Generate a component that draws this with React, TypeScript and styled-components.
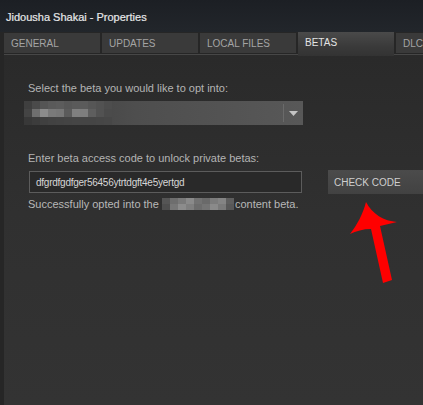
import React from 'react';
import styled, { createGlobalStyle } from 'styled-components';

const Global = createGlobalStyle`
  html, body {
    margin: 0;
    padding: 0;
    background: #262626;
  }
  body {
    font-family: "Liberation Sans", Arial, sans-serif;
    overflow: hidden;
  }
`;

// whole window
const Window = styled.div`
  position: relative;
  width: 423px;
  height: 405px;
  background: #262626;
  display: flex;
  flex-direction: column;
  overflow: hidden;
`;

const TitleBar = styled.div`
  height: 32px;
  flex: none;
  display: flex;
  align-items: center;
  padding-left: 6px;
  padding-top: 2px;
  box-sizing: border-box;
  background: linear-gradient(180deg, #1c1f24 0%, #22262b 100%);
  color: #e6e7e8;
  font-size: 11px;
  font-weight: 500;
  -webkit-text-stroke: 0.2px #e6e7e8;
`;

const TabRow = styled.div`
  display: flex;
  gap: 2px;
  padding-left: 4px;
  height: 22px;
  align-items: flex-start;
  position: relative;
  z-index: 2;
`;

const Tab = styled.div<{ $active?: boolean }>`
  flex: none;
  width: 96px;
  box-sizing: border-box;
  padding-left: 7px;
  margin-top: ${p => (p.$active ? 0 : 1)}px;
  height: ${p => (p.$active ? 24 : 20)}px;
  padding-bottom: ${p => (p.$active ? 3 : 0)}px;
  display: flex;
  align-items: center;
  font-size: 10px;
  white-space: nowrap;
  color: ${p => (p.$active ? '#e4e4e4' : '#a4a4a4')};
  background: ${p =>
    p.$active
      ? 'linear-gradient(180deg, #4a4a4a 0%, #3a3a3a 60%, #333333 100%)'
      : '#3a3a3a'};
`;

const Panel = styled.div`
  flex: 1;
  margin-left: 4px;
  border-top: 1px solid #474747;
  background: linear-gradient(180deg, #2a2a2a 0%, #303030 45%, #333333 100%);
  padding: 26px 0 0 24px;
  display: flex;
  flex-direction: column;
`;

const Label = styled.div<{ $mt?: number }>`
  font-size: 11px;
  color: #b4b4b4;
  line-height: 14px;
  margin-top: ${p => p.$mt ?? 0}px;
`;

const Dropdown = styled.div`
  margin-top: 6px;
  margin-left: -4px;
  width: 279px;
  height: 24px;
  display: flex;
  align-items: stretch;
  background: linear-gradient(90deg, #3c3c3c 0%, #4e4e4e 40%, #585858 100%);
`;

const DropValue = styled.div`
  flex: 1;
  display: flex;
  align-items: center;
`;

const DropArrow = styled.div`
  width: 19px;
  display: flex;
  align-items: center;
  justify-content: center;
  border-left: 1px solid #6a6a6a;
  margin: 3px 0;
`;

const Pixels = styled.div<{ $cols: number; $w: number; $h: number }>`
  display: grid;
  grid-template-columns: repeat(${p => p.$cols}, ${p => p.$w}px);
  grid-auto-rows: ${p => p.$h}px;
`;

const Cell = styled.span`
  display: block;
`;

const CodeRow = styled.div`
  margin-top: 5px;
  display: flex;
  align-items: center;
  gap: 26px;
`;

const CodeInput = styled.div`
  flex: none;
  margin-left: 1px;
  width: 273px;
  height: 22px;
  box-sizing: border-box;
  border: 1px solid #5c5c5c;
  background: #292929;
  display: flex;
  align-items: center;
  padding-left: 6px;
  font-size: 10px;
  letter-spacing: -0.25px;
  color: #d6d6d6;
`;

const CheckButton = styled.div`
  flex: none;
  width: 120px;
  height: 24px;
  display: flex;
  align-items: center;
  padding-left: 6px;
  box-sizing: border-box;
  background: linear-gradient(180deg, #4b4b4b 0%, #424242 100%);
  color: #cfcfcf;
  font-size: 10px;
`;

const Status = styled.div`
  margin-top: 3px;
  display: flex;
  align-items: center;
  font-size: 11px;
  color: #b8b8b8;
  line-height: 14px;
  white-space: pre;
`;

const ArrowMark = styled.svg`
  position: absolute;
  left: 340px;
  top: 195px;
`;

const dropCells = [
  '#3f3f3f', '#4a4a4a', '#555555', '#5a5a5a', '#5c5c5c', '#575757', '#5a5a5a', '#5b5b5b', '#565656', '#525252', '#4d4d4d',
  '#444444', '#6f6f6f', '#8c8c8c', '#7a7a7a', '#777777', '#5b5b5b', '#808080', '#7e7e7e', '#5e5e5e', '#525252', '#4b4b4b',
  '#383838', '#3c3c3c', '#404040', '#424242', '#434343', '#444444', '#454545', '#454545', '#454545', '#464646', '#474747',
];

const statusCells = [
  '#555555', '#6e6e6e', '#7a7a7a', '#8a8a8a', '#727272', '#6a6a6a', '#7c7c7c', '#848484', '#5e5e5e',
  '#4e4e4e', '#777777', '#8c8c8c', '#7f7f7f', '#6c6c6c', '#747474', '#8a8a8a', '#7a7a7a', '#585858',
];

export default function App() {
  const tabs = ['GENERAL', 'UPDATES', 'LOCAL FILES', 'BETAS', 'DLC'];

  return (
    <>
      <Global />
      <Window>
        <TitleBar>Jidousha Shakai - Properties</TitleBar>
        <TabRow>
          {tabs.map(t => (
            <Tab key={t} $active={t === 'BETAS'}>{t}</Tab>
          ))}
        </TabRow>
        <Panel>
          <Label>Select the beta you would like to opt into:</Label>
          <Dropdown>
            <DropValue>
              <Pixels $cols={11} $w={8} $h={8}>
                {dropCells.map((c, i) => (
                  <Cell key={i} style={{ background: c }} />
                ))}
              </Pixels>
            </DropValue>
            <DropArrow>
              <svg width="9" height="5" viewBox="0 0 9 5">
                <path d="M0 0 H9 L4.5 5 Z" fill="#c4c4c4" />
              </svg>
            </DropArrow>
          </Dropdown>

          <Label $mt={26}>Enter beta access code to unlock private betas:</Label>
          <CodeRow>
            <CodeInput>dfgrdfgdfger56456ytrtdgft4e5yertgd</CodeInput>
            <CheckButton>CHECK CODE</CheckButton>
          </CodeRow>
          <Status>
            {'Successfully opted into the '}
            <Pixels $cols={9} $w={8} $h={6} style={{ marginRight: 1 }}>
              {statusCells.map((c, i) => (
                <Cell key={i} style={{ background: c }} />
              ))}
            </Pixels>
            content beta.
          </Status>
        </Panel>

        <ArrowMark width="70" height="100" viewBox="340 195 70 100">
          <path
            d="M366 202 C372 214 384 221 397 222 L380 226 L392 280 L383 283 L371 229 C363 229 356 231 350 234 C357 225 363 214 366 202 Z"
            fill="#ff0000"
          />
        </ArrowMark>
      </Window>
    </>
  );
}
